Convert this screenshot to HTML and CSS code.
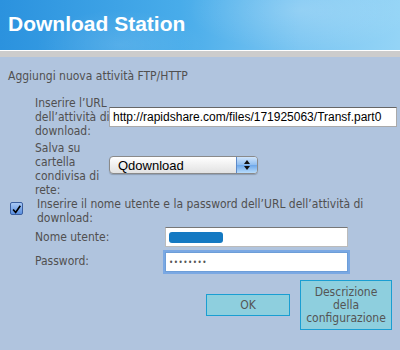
FILE: index.html
```html
<!DOCTYPE html>
<html>
<head>
    <title>Download Station</title>
    <link rel="stylesheet" href="styles.css">
</head>
<body>
    <div class="header">
        <h1>Download Station</h1>
    </div>
    <div class="divider"></div>

    <div class="content">
        <p class="intro">Aggiungi nuova attività FTP/HTTP</p>

        <div class="form-row row-url">
            <label class="field-label" for="url">Inserire l’URL<br>dell’attività di<br>download:</label>
            <input type="text" id="url" class="url-input" value="http://rapidshare.com/files/171925063/Transf.part0">
        </div>

        <div class="form-row row-folder">
            <label class="field-label" for="folder">Salva su<br>cartella<br>condivisa di<br>rete:</label>
            <div class="select-box" id="folder">
                <span>Qdownload</span>
                <span class="select-arrows">
                    <svg width="8" height="12" viewBox="0 0 8 12">
                        <path d="M4 1 L7 5 L1 5 Z" fill="#111"/>
                        <path d="M4 11 L7 7 L1 7 Z" fill="#111"/>
                    </svg>
                </span>
            </div>
        </div>

        <div class="check-row">
            <span class="checkbox">
                <svg width="13" height="13" viewBox="0 0 13 13">
                    <path d="M2.5 6.5 L5.5 10 L11 2" fill="none" stroke="#000" stroke-width="2"/>
                </svg>
            </span>
            <span class="check-text">Inserire il nome utente e la password dell’URL dell’attività di<br>download:</span>
        </div>

        <div class="login-row">
            <label class="login-label" for="user">Nome utente:</label>
            <div class="login-input" id="user"><span class="redacted"></span></div>
        </div>

        <div class="login-row">
            <label class="login-label" for="pass">Password:</label>
            <div class="login-input focused" id="pass"><span class="dots">••••••••</span></div>
        </div>

        <div class="buttons">
            <button type="button" class="btn btn-ok">OK</button>
            <button type="button" class="btn btn-desc">Descrizione<br>della<br>configurazione</button>
        </div>
    </div>
</body>
</html>
```

FILE: styles.css
```css
body {
    margin: 0;
    width: 400px;
    height: 350px;
    overflow: hidden;
    background-color: #b0c4de;
    font-family: "DejaVu Sans Condensed", "DejaVu Sans", Verdana, sans-serif;
    font-size: 12px;
    color: #505050;
}

.header {
    height: 50px;
    background:
        radial-gradient(ellipse 160px 60px at 300px 10px, rgba(255, 255, 255, 0.18), rgba(255, 255, 255, 0) 70%),
        radial-gradient(ellipse 120px 50px at 120px 45px, rgba(255, 255, 255, 0.12), rgba(255, 255, 255, 0) 70%),
        linear-gradient(to right, #2b92de, #48acea 45%, #7cc6f2 75%, #94d4f6);
    border-bottom: 1px solid #fff;
}

.header h1 {
    margin: 0;
    padding: 12px 0 0 8px;
    font-family: "Liberation Sans", Arial, sans-serif;
    font-size: 21px;
    font-weight: bold;
    line-height: 24px;
    color: #fff;
}

.divider {
    height: 6px;
    background-color: #cccccc;
}

.content {
    padding: 0 0 0 8px;
}

.intro {
    margin: 12px 0 0 0;
    line-height: 14px;
}

.form-row {
    display: flex;
    align-items: center;
    padding-left: 27px;
}

.row-url {
    margin-top: 13px;
}

.field-label {
    width: 72px;
    line-height: 14px;
    margin-right: 2px;
    white-space: nowrap;
}

.url-input {
    box-sizing: border-box;
    width: 288px;
    height: 20px;
    padding: 0 3px;
    border: 1px solid #aaa;
    border-top-color: #666;
    font-family: "Liberation Sans", Arial, sans-serif;
    font-size: 12px;
    color: #000;
    background: #fff;
}

.row-folder {
    margin-top: 3px;
}

.row-folder .select-box {
    margin-top: -8px;
}

.select-box {
    box-sizing: border-box;
    width: 149px;
    height: 18px;
    display: flex;
    align-items: center;
    justify-content: space-between;
    border: 1px solid #8a8a8a;
    border-radius: 4px;
    background: linear-gradient(#ffffff, #f0f0f0 50%, #e2e2e2);
    font-family: "Liberation Sans", Arial, sans-serif;
    font-size: 13px;
    color: #000;
    padding-left: 8px;
    overflow: hidden;
    box-shadow: 0 1px 1px rgba(0, 0, 0, 0.2);
}

.select-arrows {
    width: 20px;
    height: 16px;
    display: flex;
    align-items: center;
    justify-content: center;
    background: linear-gradient(#cfe4fb, #8ebdf0 50%, #6da7ea 51%, #b8dcfb);
    border-left: 1px solid #5d8ac9;
}

.check-row {
    display: flex;
    align-items: flex-start;
}

.checkbox {
    box-sizing: border-box;
    width: 13px;
    height: 13px;
    margin: 5px 14px 0 2px;
    border: 1px solid #3a5fa0;
    border-radius: 2px;
    background: linear-gradient(#a8c8f4, #5a8fe0);
    display: flex;
}

.check-text {
    line-height: 14px;
    white-space: nowrap;
}

.login-row {
    display: flex;
    align-items: center;
    padding-left: 27px;
    margin-top: 2px;
}

.login-label {
    width: 130px;
}

.login-input {
    box-sizing: border-box;
    width: 183px;
    height: 20px;
    background: #fff;
    border: 1px solid #bbb;
    border-top-color: #777;
    display: flex;
    align-items: center;
    padding-left: 3px;
}

.login-input.focused {
    border: 1px solid #6d9ed8;
    box-shadow: 0 0 0 2px #7aa8e3;
    margin-top: 3px;
}

.redacted {
    width: 54px;
    height: 11px;
    background: #1479c2;
    border-radius: 3px;
}

.dots {
    color: #555;
    font-size: 8px;
    letter-spacing: 0.5px;
}

.buttons {
    display: flex;
    align-items: center;
    justify-content: flex-end;
    gap: 10px;
    padding-right: 8px;
    margin-top: 8px;
}

.btn {
    font-family: "DejaVu Sans Condensed", "DejaVu Sans", Verdana, sans-serif;
    font-size: 12px;
    color: #555;
    background-color: #8ecfde;
    border: 1px solid #1a9ed2;
    line-height: 13px;
    padding: 0;
}

.btn-ok {
    width: 84px;
    height: 22px;
}

.btn-desc {
    width: 92px;
    height: 50px;
}
```
